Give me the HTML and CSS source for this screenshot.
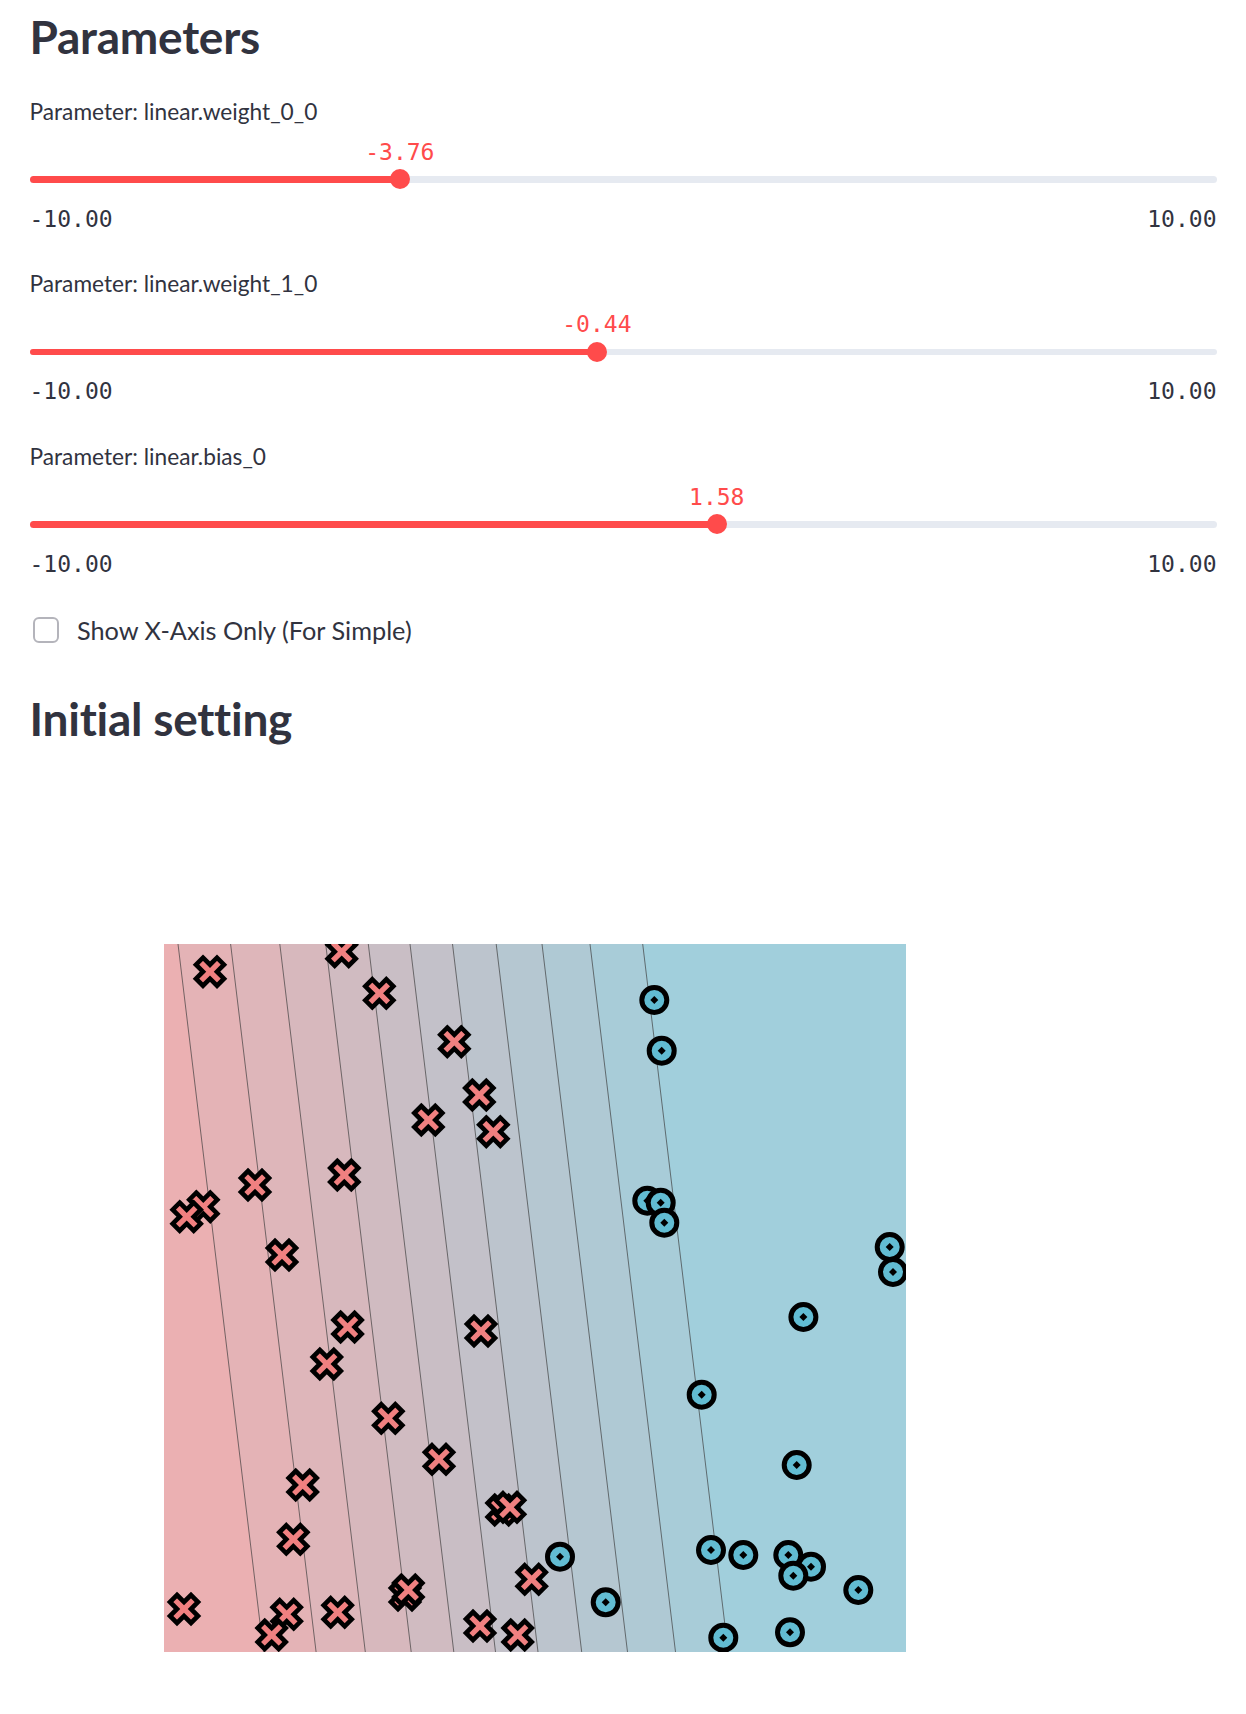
FILE: index.html
```html
<!DOCTYPE html>
<html lang="en">
<head>
<meta charset="utf-8">
<title>Parameters</title>
<link rel="stylesheet" href="styles.css">
</head>
<body>
<main class="page">
  <h2 class="heading">Parameters</h2>

  <div class="sliders">
    <section class="slider">
      <div class="slider-label">Parameter: linear.weight_0_0</div>
      <div class="slider-control">
        <div class="slider-value-row"><span class="slider-value" style="left:31.2%">-3.76</span></div>
        <div class="track"><div class="track-fill" style="width:31.2%"></div><div class="thumb" style="left:31.2%"></div></div>
      </div>
      <div class="slider-range"><span>-10.00</span><span>10.00</span></div>
    </section>

    <section class="slider">
      <div class="slider-label">Parameter: linear.weight_1_0</div>
      <div class="slider-control">
        <div class="slider-value-row"><span class="slider-value" style="left:47.8%">-0.44</span></div>
        <div class="track"><div class="track-fill" style="width:47.8%"></div><div class="thumb" style="left:47.8%"></div></div>
      </div>
      <div class="slider-range"><span>-10.00</span><span>10.00</span></div>
    </section>

    <section class="slider">
      <div class="slider-label">Parameter: linear.bias_0</div>
      <div class="slider-control">
        <div class="slider-value-row"><span class="slider-value" style="left:57.9%">1.58</span></div>
        <div class="track"><div class="track-fill" style="width:57.9%"></div><div class="thumb" style="left:57.9%"></div></div>
      </div>
      <div class="slider-range"><span>-10.00</span><span>10.00</span></div>
    </section>
  </div>

  <label class="checkbox-row">
    <span class="checkbox-box"></span>
    <span class="checkbox-text">Show X-Axis Only (For Simple)</span>
  </label>

  <h2 class="heading heading-second">Initial setting</h2>

  <svg class="plot" width="742" height="708" viewBox="0 0 742 708" xmlns="http://www.w3.org/2000/svg">
    <defs>
      <path id="xm" d="M-7,-14 L0,-7 L7,-14 L14,-7 L7,0 L14,7 L7,14 L0,7 L-7,14 L-14,7 L-7,0 L-14,-7 Z" fill="#f08080" stroke="#000" stroke-width="4.6" stroke-linejoin="miter"/>
      <g id="om">
        <circle r="12.5" fill="#62bcd2" stroke="#000" stroke-width="5"/>
        <polygon points="0,-4 4,0 0,4 -4,0" fill="#000"/>
      </g>
    </defs>
    <rect x="0" y="0" width="742" height="708" fill="#a1cfdc"/>
    <polygon points="0,0 478.7,0 564.2,708 0,708" fill="#a8ccd8"/>
    <polygon points="0,0 426,0 511.5,708 0,708" fill="#afc9d4"/>
    <polygon points="0,0 378,0 463.5,708 0,708" fill="#b5c7d1"/>
    <polygon points="0,0 332.2,0 417.7,708 0,708" fill="#bcc4cd"/>
    <polygon points="0,0 288.5,0 374,708 0,708" fill="#c3c1c9"/>
    <polygon points="0,0 246,0 331.5,708 0,708" fill="#c9bec5"/>
    <polygon points="0,0 204.3,0 289.8,708 0,708" fill="#d0bbc1"/>
    <polygon points="0,0 161.7,0 247.2,708 0,708" fill="#d7b8bd"/>
    <polygon points="0,0 115.8,0 201.3,708 0,708" fill="#deb6ba"/>
    <polygon points="0,0 66.6,0 152.1,708 0,708" fill="#e4b3b6"/>
    <polygon points="0,0 14,0 99.5,708 0,708" fill="#ebb0b2"/>
    <g stroke="#3c3c3c" stroke-width="0.8" stroke-opacity="0.85">
      <line x1="14" y1="0" x2="99.5" y2="708"/>
      <line x1="66.6" y1="0" x2="152.1" y2="708"/>
      <line x1="115.8" y1="0" x2="201.3" y2="708"/>
      <line x1="161.7" y1="0" x2="247.2" y2="708"/>
      <line x1="204.3" y1="0" x2="289.8" y2="708"/>
      <line x1="246" y1="0" x2="331.5" y2="708"/>
      <line x1="288.5" y1="0" x2="374" y2="708"/>
      <line x1="332.2" y1="0" x2="417.7" y2="708"/>
      <line x1="378" y1="0" x2="463.5" y2="708"/>
      <line x1="426" y1="0" x2="511.5" y2="708"/>
      <line x1="478.7" y1="0" x2="564.2" y2="708"/>
    </g>
    <g>
      <use href="#xm" x="46" y="27.7"/>
      <use href="#xm" x="177.7" y="7.7"/>
      <use href="#xm" x="215.3" y="49.3"/>
      <use href="#xm" x="290.3" y="97.7"/>
      <use href="#xm" x="315.3" y="151"/>
      <use href="#xm" x="264.3" y="176"/>
      <use href="#xm" x="329.3" y="187.7"/>
      <use href="#xm" x="91" y="241"/>
      <use href="#xm" x="180.3" y="231"/>
      <use href="#xm" x="39.3" y="262.7"/>
      <use href="#xm" x="22.7" y="272.7"/>
      <use href="#xm" x="118" y="311"/>
      <use href="#xm" x="183.6" y="383"/>
      <use href="#xm" x="317" y="387"/>
      <use href="#xm" x="162.8" y="420"/>
      <use href="#xm" x="224.3" y="474.3"/>
      <use href="#xm" x="275" y="515.3"/>
      <use href="#xm" x="138.7" y="541"/>
      <use href="#xm" x="129.3" y="595.3"/>
      <use href="#xm" x="337.7" y="566"/>
      <use href="#xm" x="346" y="563.3"/>
      <use href="#xm" x="367.7" y="635.3"/>
      <use href="#xm" x="241" y="651"/>
      <use href="#xm" x="244.3" y="646"/>
      <use href="#xm" x="20" y="665"/>
      <use href="#xm" x="122.7" y="670.3"/>
      <use href="#xm" x="107.7" y="691"/>
      <use href="#xm" x="173.7" y="668.3"/>
      <use href="#xm" x="316" y="682"/>
      <use href="#xm" x="353.7" y="691"/>
    </g>
    <g>
      <use href="#om" x="490.3" y="56"/>
      <use href="#om" x="497.7" y="106.7"/>
      <use href="#om" x="483.3" y="256.7"/>
      <use href="#om" x="496.7" y="258.7"/>
      <use href="#om" x="500.3" y="278.7"/>
      <use href="#om" x="725.7" y="303"/>
      <use href="#om" x="729" y="328"/>
      <use href="#om" x="639.4" y="373"/>
      <use href="#om" x="537.7" y="450.7"/>
      <use href="#om" x="632.7" y="521"/>
      <use href="#om" x="396" y="612.7"/>
      <use href="#om" x="441.7" y="658.3"/>
      <use href="#om" x="547" y="606"/>
      <use href="#om" x="579.3" y="611"/>
      <use href="#om" x="624.3" y="611"/>
      <use href="#om" x="647" y="622.7"/>
      <use href="#om" x="629.3" y="631.7"/>
      <use href="#om" x="694.3" y="646"/>
      <use href="#om" x="559.3" y="693.7"/>
      <use href="#om" x="626" y="688.3"/>
    </g>
  </svg>
</main>
</body>
</html>
```

FILE: styles.css
```css
* { box-sizing: border-box; }

html, body {
  margin: 0;
  background: #ffffff;
}

body {
  font-family: Lato, "Noto Sans", sans-serif;
  color: #31333f;
}

.page {
  width: 1246px;
  padding: 8.5px 29.5px 0;
}

.heading {
  margin: 0;
  height: 55px;
  font-size: 46px;
  line-height: 55px;
  font-weight: 700;
  letter-spacing: -0.25px;
  color: #31333f;
}

.sliders {
  margin-top: 33px;
  display: flex;
  flex-direction: column;
  gap: 36.6px;
}

.slider-label {
  height: 30px;
  font-size: 22.7px;
  line-height: 30px;
}

.slider-control {
  margin-top: 12px;
}

.slider-value-row {
  position: relative;
  height: 27px;
}

.slider-value {
  position: absolute;
  top: 0;
  transform: translateX(-50%);
  font-family: "DejaVu Sans Mono", "Liberation Mono", monospace;
  font-size: 23px;
  line-height: 27px;
  color: #ff4b4b;
  white-space: nowrap;
}

.track {
  position: relative;
  margin-top: 10.5px;
  height: 6.5px;
  border-radius: 4px;
  background: #e6eaf1;
}

.track-fill {
  height: 100%;
  border-radius: 4px 0 0 4px;
  background: #ff4b4b;
}

.thumb {
  position: absolute;
  top: 50%;
  width: 20px;
  height: 20px;
  margin: -10px 0 0 -10px;
  border-radius: 50%;
  background: #ff4b4b;
}

.slider-range {
  display: flex;
  justify-content: space-between;
  margin-top: 22px;
  height: 28px;
  font-family: "DejaVu Sans Mono", "Liberation Mono", monospace;
  font-size: 23px;
  line-height: 28px;
  color: #31333f;
}

.checkbox-row {
  display: flex;
  align-items: center;
  gap: 18.5px;
  margin-top: 37.7px;
  height: 30px;
  padding-left: 3px;
}

.checkbox-box {
  width: 26px;
  height: 26px;
  border: 2.5px solid #b4b4bb;
  border-radius: 6px;
  background: #fff;
}

.checkbox-text {
  font-size: 25.3px;
  line-height: 30px;
}

.heading-second {
  margin-top: 45.8px;
}

.plot {
  display: block;
  width: 742px;
  height: 708px;
  margin: 197.5px 0 0 134.5px;
}
```
